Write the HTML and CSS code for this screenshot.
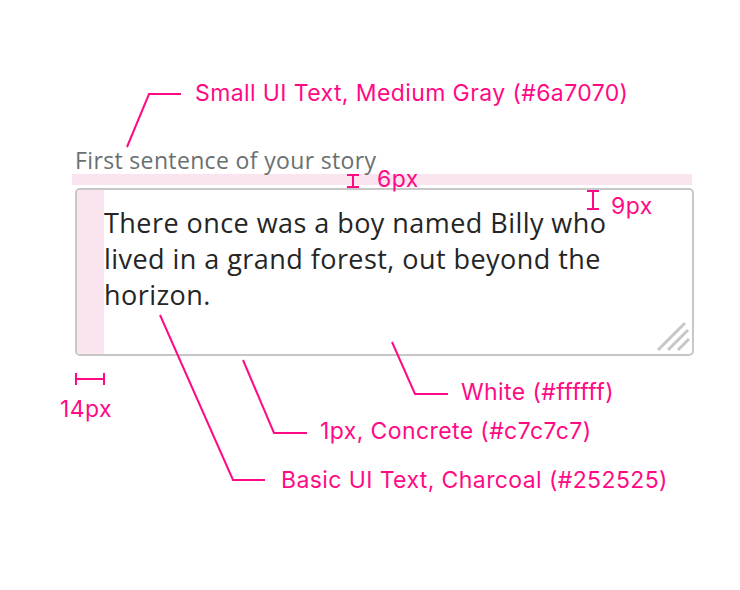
FILE: index.html
```html
<!DOCTYPE html>
<html lang="en">
<head>
    <meta charset="UTF-8">
    <title>Text area spec</title>
    <link rel="stylesheet" href="styles.css">
</head>
<body>
    <div class="spec">
        <div class="gap-band"></div>

        <div class="field">
            <div class="field-label">First sentence of your story</div>
            <div class="text-box">
                <div class="pad-mark"></div>
                <div class="text-body">There once was a boy named Billy who lived in a grand forest, out beyond the horizon.</div>
                <svg class="resize-grip" width="36" height="36" viewBox="0 0 36 36">
                    <line x1="3" y1="33" x2="30" y2="6" />
                    <line x1="13" y1="33" x2="33" y2="13" />
                    <line x1="23" y1="33" x2="34" y2="22" />
                </svg>
            </div>
        </div>

        <!-- annotation leaders and measure marks -->
        <svg class="marks" width="740" height="590" viewBox="0 0 740 590">
            <polyline points="127,147 149,94 181,94" />
            <polyline points="392,342 415,394 448,394" />
            <polyline points="243,360 274,433 307,433" />
            <polyline points="160,315 233,480 265,480" />
            <!-- 6px -->
            <line x1="353" y1="175" x2="353" y2="187" />
            <line x1="347" y1="175" x2="359" y2="175" />
            <line x1="347" y1="187" x2="359" y2="187" />
            <!-- 9px -->
            <line x1="593" y1="191" x2="593" y2="209" />
            <line x1="587" y1="191" x2="599" y2="191" />
            <line x1="587" y1="209" x2="599" y2="209" />
            <!-- 14px -->
            <line x1="76" y1="379" x2="104" y2="379" />
            <line x1="76" y1="373" x2="76" y2="385" />
            <line x1="104" y1="373" x2="104" y2="385" />
        </svg>

        <span class="note note-small">Small UI Text, Medium Gray (#6a7070)</span>
        <span class="note note-6">6px</span>
        <span class="note note-9">9px</span>
        <span class="note note-14">14px</span>
        <span class="note note-white">White (#ffffff)</span>
        <span class="note note-border">1px, Concrete (#c7c7c7)</span>
        <span class="note note-text">Basic UI Text, Charcoal (#252525)</span>
    </div>
</body>
</html>
```

FILE: styles.css
```css
:root {
    --note: #ff0a84;
    --mark-bg: #fae4f0;
    --label: #6a7070;
    --text: #252525;
    --border: #c7c7c7;
}

body {
    margin: 0;
    background: #ffffff;
}

.spec {
    position: relative;
    width: 740px;
    height: 590px;
    overflow: hidden;
}

.gap-band {
    position: absolute;
    left: 72px;
    top: 174px;
    width: 620px;
    height: 11px;
    background: var(--mark-bg);
}

.field {
    position: relative;
    padding: 147px 0 0 75px;
    width: 619px;
}

.field-label {
    font-family: "Open Sans", sans-serif;
    font-size: 23px;
    letter-spacing: 0.35px;
    line-height: 26px;
    color: var(--label);
    margin: 0 0 15px 0;
}

.text-box {
    position: relative;
    display: flex;
    box-sizing: border-box;
    height: 168px;
    border: 2px solid var(--border);
    border-radius: 5px;
    background: #ffffff;
    overflow: hidden;
}

.pad-mark {
    flex: 0 0 27px;
    background: var(--mark-bg);
}

.text-body {
    flex: 1;
    padding: 15px 60px 0 0;
    font-family: "Open Sans", sans-serif;
    font-size: 27px;
    letter-spacing: 0.45px;
    line-height: 36px;
    color: var(--text);
}

.resize-grip {
    position: absolute;
    right: 1px;
    bottom: 1px;
}

.resize-grip line {
    stroke: var(--border);
    stroke-width: 3;
}

.marks {
    position: absolute;
    left: 0;
    top: 0;
}

.marks polyline,
.marks line {
    fill: none;
    stroke: var(--note);
    stroke-width: 2;
}

.note {
    position: absolute;
    font-family: Inter, "Liberation Sans", sans-serif;
    font-size: 23px;
    letter-spacing: 0.4px;
    line-height: 26px;
    color: var(--note);
    white-space: nowrap;
}

.note-small  { left: 195px; top: 80px; }
.note-6      { left: 377px; top: 166px; }
.note-9      { left: 611px; top: 193px; }
.note-14     { left: 60px;  top: 396px; }
.note-white  { left: 461px; top: 379px; }
.note-border { left: 320px; top: 418px; }
.note-text   { left: 281px; top: 467px; }
```
